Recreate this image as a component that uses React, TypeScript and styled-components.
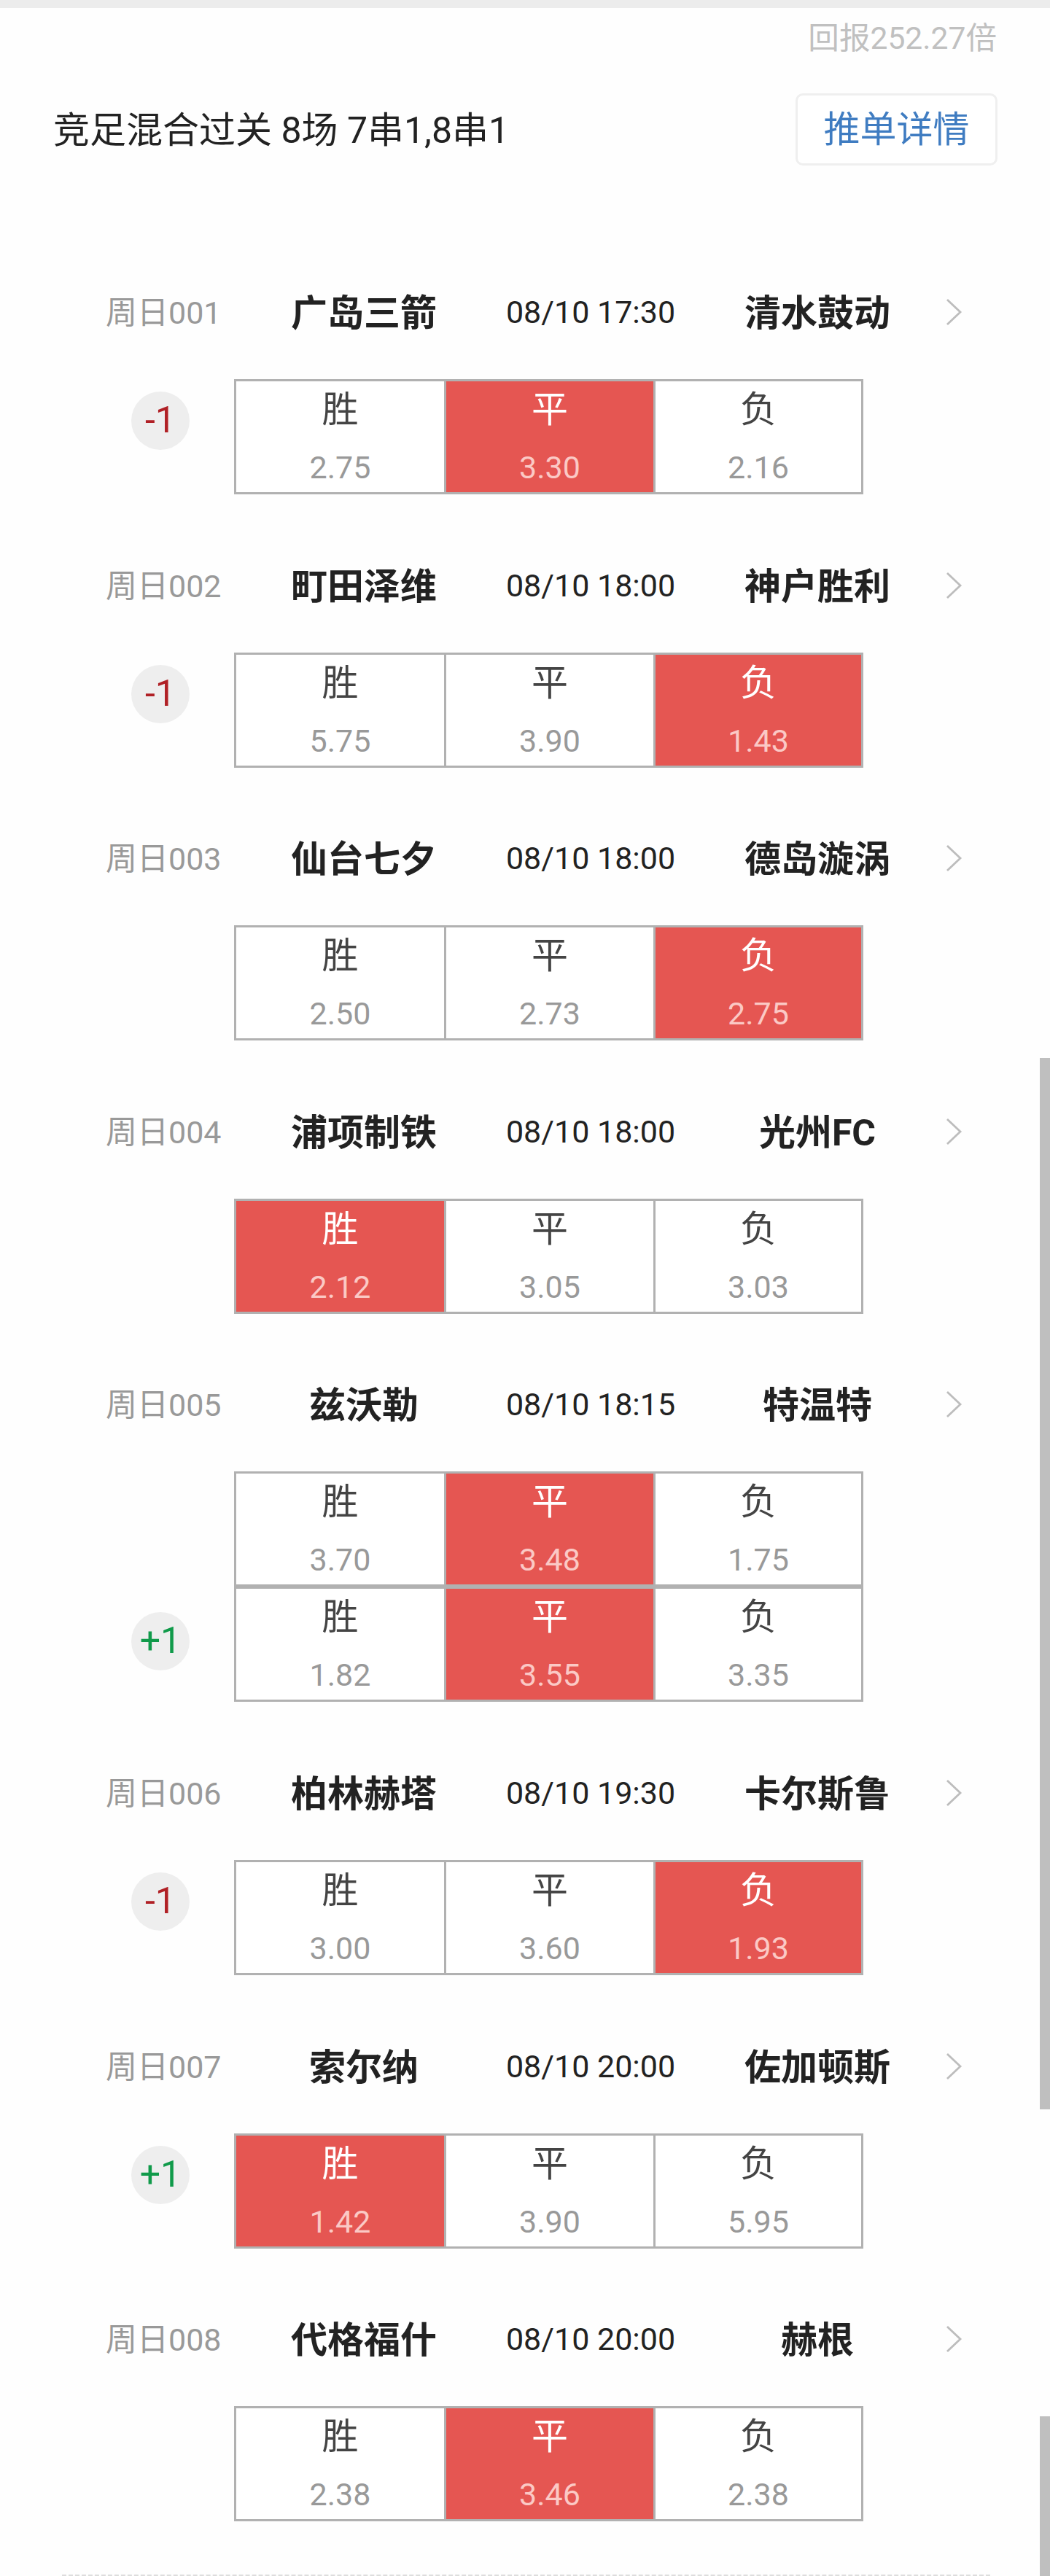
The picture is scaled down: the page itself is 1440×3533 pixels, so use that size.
import styled, { createGlobalStyle } from "styled-components";

const GlobalStyle = createGlobalStyle`
  body {
    background: #fefefe;
    color: #222;
    font-family: Roboto, "Noto Sans CJK SC", sans-serif;
    margin: 0;
  }
`;

const Page = styled.div`
  box-sizing: border-box;
  height: 3533px;
  overflow: hidden;
  position: relative;
  width: 1440px;
`;

const TopStrip = styled.div`
  background: #ececec;
  height: 11px;
`;

const Return = styled.div`
  color: #c0c0c0;
  font-size: 42.6px;
  height: 117px;
  line-height: 83px;
  padding-right: 73px;
  text-align: right;
`;

const Header = styled.header`
  align-items: center;
  display: flex;
  height: 99px;
  justify-content: space-between;
  padding: 0 72px 0 73px;
`;

const Title = styled.h1`
  font-size: 50px;
  font-weight: 400;
  line-height: 99px;
  margin: 0;
  padding-top: 4px;
`;

const DetailButton = styled.button`
  background: #fff;
  border: 3px solid #efefef;
  border-radius: 10px;
  box-sizing: border-box;
  color: #3f7cc1;
  font-family: inherit;
  font-size: 50px;
  height: 99px;
  line-height: 90px;
  padding: 0;
  width: 277px;
`;

const MatchList = styled.main`
  padding-top: 159px;
`;

const Match = styled.section`
  padding-bottom: 82.6px;

  &:last-child {
    padding-bottom: 73px;
  }
`;

const MatchHead = styled.div`
  align-items: center;
  display: grid;
  grid-template-columns: 207px 294px 330px 290px 1fr;
  height: 84px;
  margin-bottom: 50px;
  padding-left: 145px;
`;

const Code = styled.span`
  color: #999;
  font-size: 43px;
  line-height: 82px;
  padding-top: 2px;
`;

const Team = styled.strong`
  font-size: 50px;
  font-weight: 700;
  line-height: 80px;
  padding-top: 4px;
  text-align: center;
`;

const Kickoff = styled.time`
  font-size: 43px;
  margin-left: -2px;
  text-align: center;
`;

const Arrow = styled.svg`
  display: block;
  margin-left: 31px;
`;

const OddsRow = styled.div`
  display: flex;
  height: 158px;
`;

const BadgeColumn = styled.div<{ $low?: boolean }>`
  box-sizing: border-box;
  padding: ${({ $low }) => ($low ? 35 : 17)}px 0 0 180px;
  width: 321px;
`;

const Badge = styled.div<{ $positive: boolean }>`
  background: #eee;
  border-radius: 50%;
  color: ${({ $positive }) => ($positive ? "#109a4a" : "#b02025")};
  font-size: 50px;
  height: 80px;
  line-height: 78px;
  text-align: center;
  width: 80px;
`;

const Options = styled.div`
  border: 3px solid #b1b1b1;
  box-sizing: border-box;
  display: grid;
  grid-template-columns: 285px 287px 1fr;
  height: 158px;
  width: 863px;
`;

const Option = styled.div<{ $active: boolean }>`
  background: ${({ $active }) => ($active ? "#e55652" : "#fff")};
  color: ${({ $active }) => ($active ? "#fff" : "#444")};
  text-align: center;

  & + & {
    border-left: 3px solid #b1b1b1;
  }
`;

const OptionName = styled.div`
  font-size: 50px;
  height: 78px;
  line-height: 79px;
`;

const OptionOdds = styled.div<{ $active: boolean }>`
  color: ${({ $active }) => ($active ? "#fbc9c5" : "#999")};
  font-size: 43px;
  height: 74px;
  line-height: 80px;
`;

const Divider = styled.div`
  border-top: 3px dashed #ddd;
  margin: 0 82px 0 85px;
`;

const ScrollThumb = styled.div<{ $top: number; $height: number }>`
  background: #bfbfbf;
  height: ${({ $height }) => $height}px;
  position: absolute;
  right: 0;
  top: ${({ $top }) => $top}px;
  width: 14px;
`;

type Line = {
  handicap?: string;
  odds: string[];
  pick: number;
};

type MatchData = {
  code: string;
  home: string;
  away: string;
  time: string;
  lines: Line[];
};

const LABELS = ["胜", "平", "负"];

const MATCHES: MatchData[] = [
  {
    code: "周日001",
    home: "广岛三箭",
    away: "清水鼓动",
    time: "08/10 17:30",
    lines: [{ handicap: "-1", odds: ["2.75", "3.30", "2.16"], pick: 1 }],
  },
  {
    code: "周日002",
    home: "町田泽维",
    away: "神户胜利",
    time: "08/10 18:00",
    lines: [{ handicap: "-1", odds: ["5.75", "3.90", "1.43"], pick: 2 }],
  },
  {
    code: "周日003",
    home: "仙台七夕",
    away: "德岛漩涡",
    time: "08/10 18:00",
    lines: [{ odds: ["2.50", "2.73", "2.75"], pick: 2 }],
  },
  {
    code: "周日004",
    home: "浦项制铁",
    away: "光州FC",
    time: "08/10 18:00",
    lines: [{ odds: ["2.12", "3.05", "3.03"], pick: 0 }],
  },
  {
    code: "周日005",
    home: "兹沃勒",
    away: "特温特",
    time: "08/10 18:15",
    lines: [
      { odds: ["3.70", "3.48", "1.75"], pick: 1 },
      { handicap: "+1", odds: ["1.82", "3.55", "3.35"], pick: 1 },
    ],
  },
  {
    code: "周日006",
    home: "柏林赫塔",
    away: "卡尔斯鲁",
    time: "08/10 19:30",
    lines: [{ handicap: "-1", odds: ["3.00", "3.60", "1.93"], pick: 2 }],
  },
  {
    code: "周日007",
    home: "索尔纳",
    away: "佐加顿斯",
    time: "08/10 20:00",
    lines: [{ handicap: "+1", odds: ["1.42", "3.90", "5.95"], pick: 0 }],
  },
  {
    code: "周日008",
    home: "代格福什",
    away: "赫根",
    time: "08/10 20:00",
    lines: [{ odds: ["2.38", "3.46", "2.38"], pick: 1 }],
  },
];

function MatchItem({ match }: { match: MatchData }) {
  return (
    <Match>
      <MatchHead>
        <Code>{match.code}</Code>
        <Team>{match.home}</Team>
        <Kickoff>{match.time}</Kickoff>
        <Team>{match.away}</Team>
        <Arrow width="24" height="40" viewBox="0 0 24 40" fill="none">
          <path d="M2 3L20 20L2 37" stroke="#bdbdbd" strokeWidth="2.8" />
        </Arrow>
      </MatchHead>
      {match.lines.map((line, index) => (
        <OddsRow key={index}>
          <BadgeColumn $low={index > 0}>
            {line.handicap && (
              <Badge $positive={line.handicap.startsWith("+")}>
                {line.handicap}
              </Badge>
            )}
          </BadgeColumn>
          <Options>
            {LABELS.map((label, i) => (
              <Option key={label} $active={line.pick === i}>
                <OptionName>{label}</OptionName>
                <OptionOdds $active={line.pick === i}>{line.odds[i]}</OptionOdds>
              </Option>
            ))}
          </Options>
        </OddsRow>
      ))}
    </Match>
  );
}

export default function App() {
  return (
    <Page>
      <GlobalStyle />
      <TopStrip />
      <Return>回报252.27倍</Return>
      <Header>
        <Title>竞足混合过关 8场 7串1,8串1</Title>
        <DetailButton>推单详情</DetailButton>
      </Header>
      <MatchList>
        {MATCHES.map((match) => (
          <MatchItem key={match.code} match={match} />
        ))}
      </MatchList>
      <Divider />
      <ScrollThumb $top={1451} $height={1442} />
      <ScrollThumb $top={3314} $height={219} />
    </Page>
  );
}
